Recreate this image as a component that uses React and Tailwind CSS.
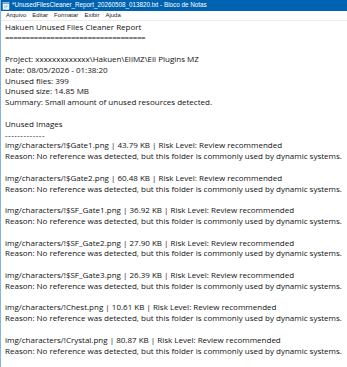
import React from "react";

const reason =
  "Reason: No reference was detected, but this folder is commonly used by dynamic systems.";

const files = [
  ["img/characters/!$Gate1.png", "43.79 KB"],
  ["img/characters/!$Gate2.png", "60.48 KB"],
  ["img/characters/!$SF_Gate1.png", "36.92 KB"],
  ["img/characters/!$SF_Gate2.png", "27.90 KB"],
  ["img/characters/!$SF_Gate3.png", "26.39 KB"],
  ["img/characters/!Chest.png", "10.61 KB"],
  ["img/characters/!Crystal.png", "80.87 KB"],
];

// every line of the report, blank strings are empty lines
const lines = [
  { t: "Hakuen Unused Files Cleaner Report" },
  { t: "==================================", cls: "tracking-[-0.45px]" },
  { t: "" },
  { t: "Project: xxxxxxxxxxxxx\\Hakuen\\EliMZ\\Eli Plugins MZ" },
  { t: "Date: 08/05/2026 - 01:38:20" },
  { t: "Unused files: 399" },
  { t: "Unused size: 14.85 MB" },
  { t: "Summary: Small amount of unused resources detected." },
  { t: "" },
  { t: "Unused Images" },
  { t: "-------------", cls: "tracking-[0.5px]" },
];

files.forEach(([path, size], i) => {
  if (i > 0) lines.push({ t: "" });
  lines.push({ t: `${path} | ${size} | Risk Level: Review recommended` });
  lines.push({ t: reason });
});

const NotepadIcon = () => (
  <svg width="8" height="8" viewBox="0 0 8 8">
    <rect x="1" y="0.5" width="6" height="7" fill="#fff" stroke="#cfe3f5" strokeWidth="0.6" />
    <rect x="1" y="0.5" width="6" height="1.4" fill="#5ea0dd" />
    <line x1="2" y1="3.2" x2="6" y2="3.2" stroke="#7a9cc0" strokeWidth="0.5" />
    <line x1="2" y1="4.5" x2="6" y2="4.5" stroke="#7a9cc0" strokeWidth="0.5" />
    <line x1="2" y1="5.8" x2="5" y2="5.8" stroke="#7a9cc0" strokeWidth="0.5" />
  </svg>
);

export default function App() {
  return (
    <div className="w-[347px] h-[367px] bg-white flex flex-col overflow-hidden border-l border-[#8ab4e0]">
      {/* title bar */}
      <div className="h-[11px] bg-[#0063b1] flex items-center pl-[1px] gap-[2px] shrink-0">
        <NotepadIcon />
        <span
          className="text-white text-[6.3px] leading-none whitespace-nowrap"
          style={{ fontFamily: "'Liberation Sans', sans-serif" }}
        >
          *UnusedFilesCleaner_Report_20260508_013820.txt - Bloco de Notas
        </span>
      </div>

      {/* menu */}
      <div
        className="h-[10px] flex items-center gap-[6px] pl-[5px] text-[6px] text-[#222] shrink-0 border-b border-[#ececec]"
        style={{ fontFamily: "'Liberation Sans', sans-serif" }}
      >
        <span>Arquivo</span>
        <span>Editar</span>
        <span>Formatar</span>
        <span>Exibir</span>
        <span>Ajuda</span>
      </div>

      {/* text area */}
      <div
        className="pl-[4px] pt-[0.6px] text-[8px] leading-[10.8px] text-[#111]"
        style={{ fontFamily: "'Open Sans', sans-serif" }}
      >
        {lines.map((l, i) => (
          <div key={i} className={`h-[10.8px] whitespace-pre ${l.cls || ""}`}>
            {l.t}
          </div>
        ))}
      </div>
    </div>
  );
}
